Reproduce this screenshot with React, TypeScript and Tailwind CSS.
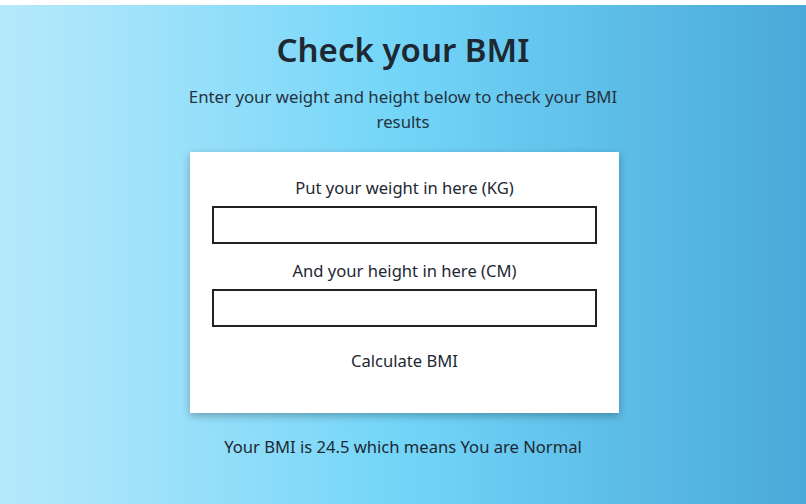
import { useState } from "react";

export default function App() {
  const [weight, setWeight] = useState("");
  const [height, setHeight] = useState("");

  return (
    <div className="min-h-screen bg-white pt-[5px] font-['Noto_Sans',sans-serif] text-[#1e2832]">
      <main className="h-[499px] bg-gradient-to-r from-[#b6e9fb] via-[#72d5f8] to-[#4aa9d8] flex flex-col items-center">
        <h1 className="mt-[22px] text-[33px] leading-[46px] font-semibold">Check your BMI</h1>
        <p className="mt-[11px] w-[440px] text-center text-[16.8px] leading-[25px] text-[#253240]">
          Enter your weight and height below to check your BMI results
        </p>

        {/* Form card */}
        <div className="mt-[18px] ml-[3px] w-[429px] h-[261px] bg-white shadow-[0_3px_8px_rgba(0,0,0,0.28)] flex flex-col items-center pt-[24px]">
          <label className="text-[16.6px] leading-[24px]">Put your weight in here (KG)</label>
          <input
            value={weight}
            onChange={(e) => setWeight(e.target.value)}
            className="mt-[6px] w-[385px] h-[38px] border-2 border-[#222] outline-none px-2"
          />
          <label className="mt-[15px] text-[16.6px] leading-[24px]">And your height in here (CM)</label>
          <input
            value={height}
            onChange={(e) => setHeight(e.target.value)}
            className="mt-[6px] w-[385px] h-[38px] border-2 border-[#222] outline-none px-2"
          />
          <button className="mt-[22px] text-[16.6px] leading-[24px]">Calculate BMI</button>
        </div>

        <p className="mt-[22px] text-[16.6px] leading-[24px]">Your BMI is 24.5 which means You are Normal</p>
      </main>
    </div>
  );
}
